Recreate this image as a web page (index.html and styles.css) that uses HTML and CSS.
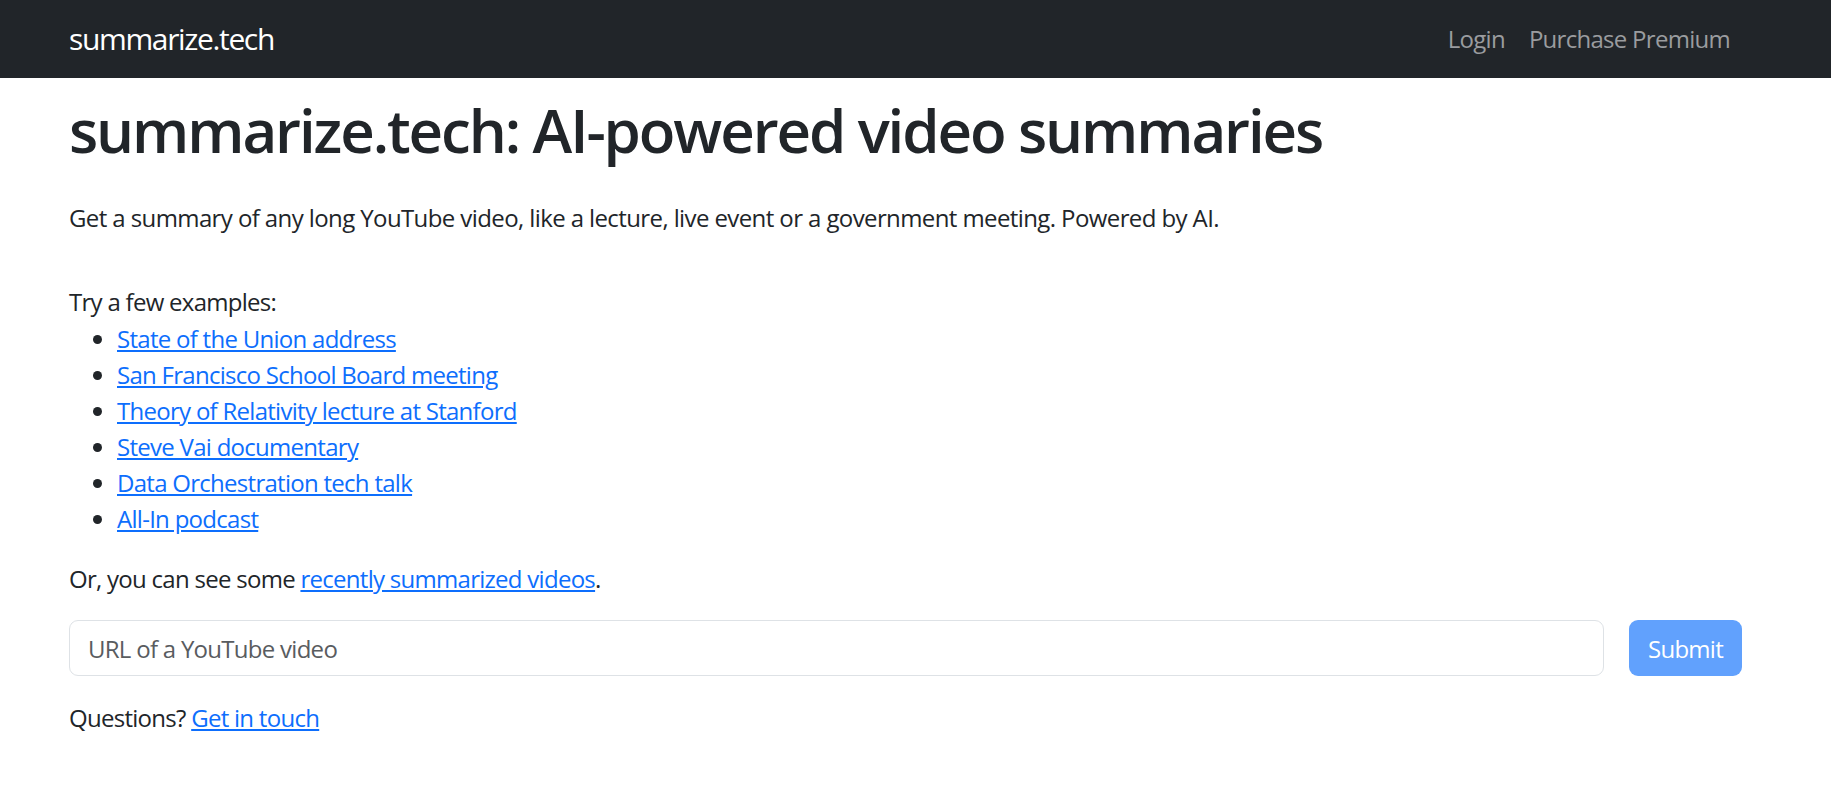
FILE: index.html
```html
<!DOCTYPE html>
<html lang="en">
<head>
<meta charset="utf-8">
<title>summarize.tech: AI-powered video summaries</title>
<link rel="stylesheet" href="styles.css">
</head>
<body>
<nav class="navbar">
  <a class="brand" href="#">summarize.tech</a>
  <div class="nav-links">
    <a class="nav-link" href="#">Login</a>
    <a class="nav-link" href="#">Purchase Premium</a>
  </div>
</nav>
<main class="content">
  <h1 class="title">summarize.tech: AI-powered video summaries</h1>
  <p class="lead">Get a summary of any long YouTube video, like a lecture, live event or a government meeting. Powered by AI.</p>
  <p class="examples-label">Try a few examples:</p>
  <ul class="examples">
    <li><a href="#">State of the Union address</a></li>
    <li><a href="#">San Francisco School Board meeting</a></li>
    <li><a href="#">Theory of Relativity lecture at Stanford</a></li>
    <li><a href="#">Steve Vai documentary</a></li>
    <li><a href="#">Data Orchestration tech talk</a></li>
    <li><a href="#">All-In podcast</a></li>
  </ul>
  <p class="recent">Or, you can see some <a href="#">recently summarized videos</a>.</p>
  <form class="url-form">
    <input class="url-input" type="text" placeholder="URL of a YouTube video">
    <button class="submit-btn" type="button" disabled>Submit</button>
  </form>
  <p class="questions">Questions? <a href="#">Get in touch</a></p>
</main>
</body>
</html>
```
FILE: styles.css
```css
* { box-sizing: border-box; }

html, body {
  margin: 0;
  padding: 0;
  background: #fff;
}

body {
  font-family: "Open Sans", "Noto Sans", sans-serif;
  font-size: 24px;
  line-height: 36px;
  color: #212529;
}

a { color: #0d6efd; }

.navbar {
  height: 78px;
  background: #212529;
  display: flex;
  align-items: center;
  justify-content: space-between;
  padding: 0 89px 0 69px;
}

.brand {
  color: #fff;
  text-decoration: none;
  font-size: 30px;
  line-height: 40px;
  letter-spacing: -0.045em;
}

.nav-links {
  display: flex;
}

.nav-link {
  color: #9a9c9f;
  text-decoration: none;
  padding: 0 12px;
  letter-spacing: -0.03em;
}

.content {
  padding: 0 89px 0 69px;
  letter-spacing: -0.03em;
}

.title {
  margin: 16px 0 0;
  font-size: 60px;
  line-height: 72px;
  font-weight: 600;
  letter-spacing: -0.035em;
}

.lead {
  margin: 34px 0 0;
  letter-spacing: -0.025em;
}

.examples-label {
  margin: 48px 0 0;
}

.examples {
  margin: 1px 0 0;
  padding-left: 48px;
}

.recent {
  margin: 24px 0 0;
}

.url-form {
  margin: 23px 0 0;
  display: flex;
  gap: 25px;
}

.url-input {
  flex: 1;
  height: 56px;
  border: 1.5px solid #dee2e6;
  border-radius: 9px;
  padding: 0 18px;
  font-family: inherit;
  font-size: 24px;
  letter-spacing: -0.03em;
  color: #212529;
  background: #fff;
}

.url-input::placeholder {
  color: #595c5f;
}

.submit-btn {
  height: 56px;
  width: 113px;
  border: none;
  border-radius: 9px;
  background: #61a1fd;
  color: #fff;
  font-family: inherit;
  font-size: 24px;
  letter-spacing: -0.03em;
  padding: 0;
}

.questions {
  margin: 24px 0 0;
}
```
